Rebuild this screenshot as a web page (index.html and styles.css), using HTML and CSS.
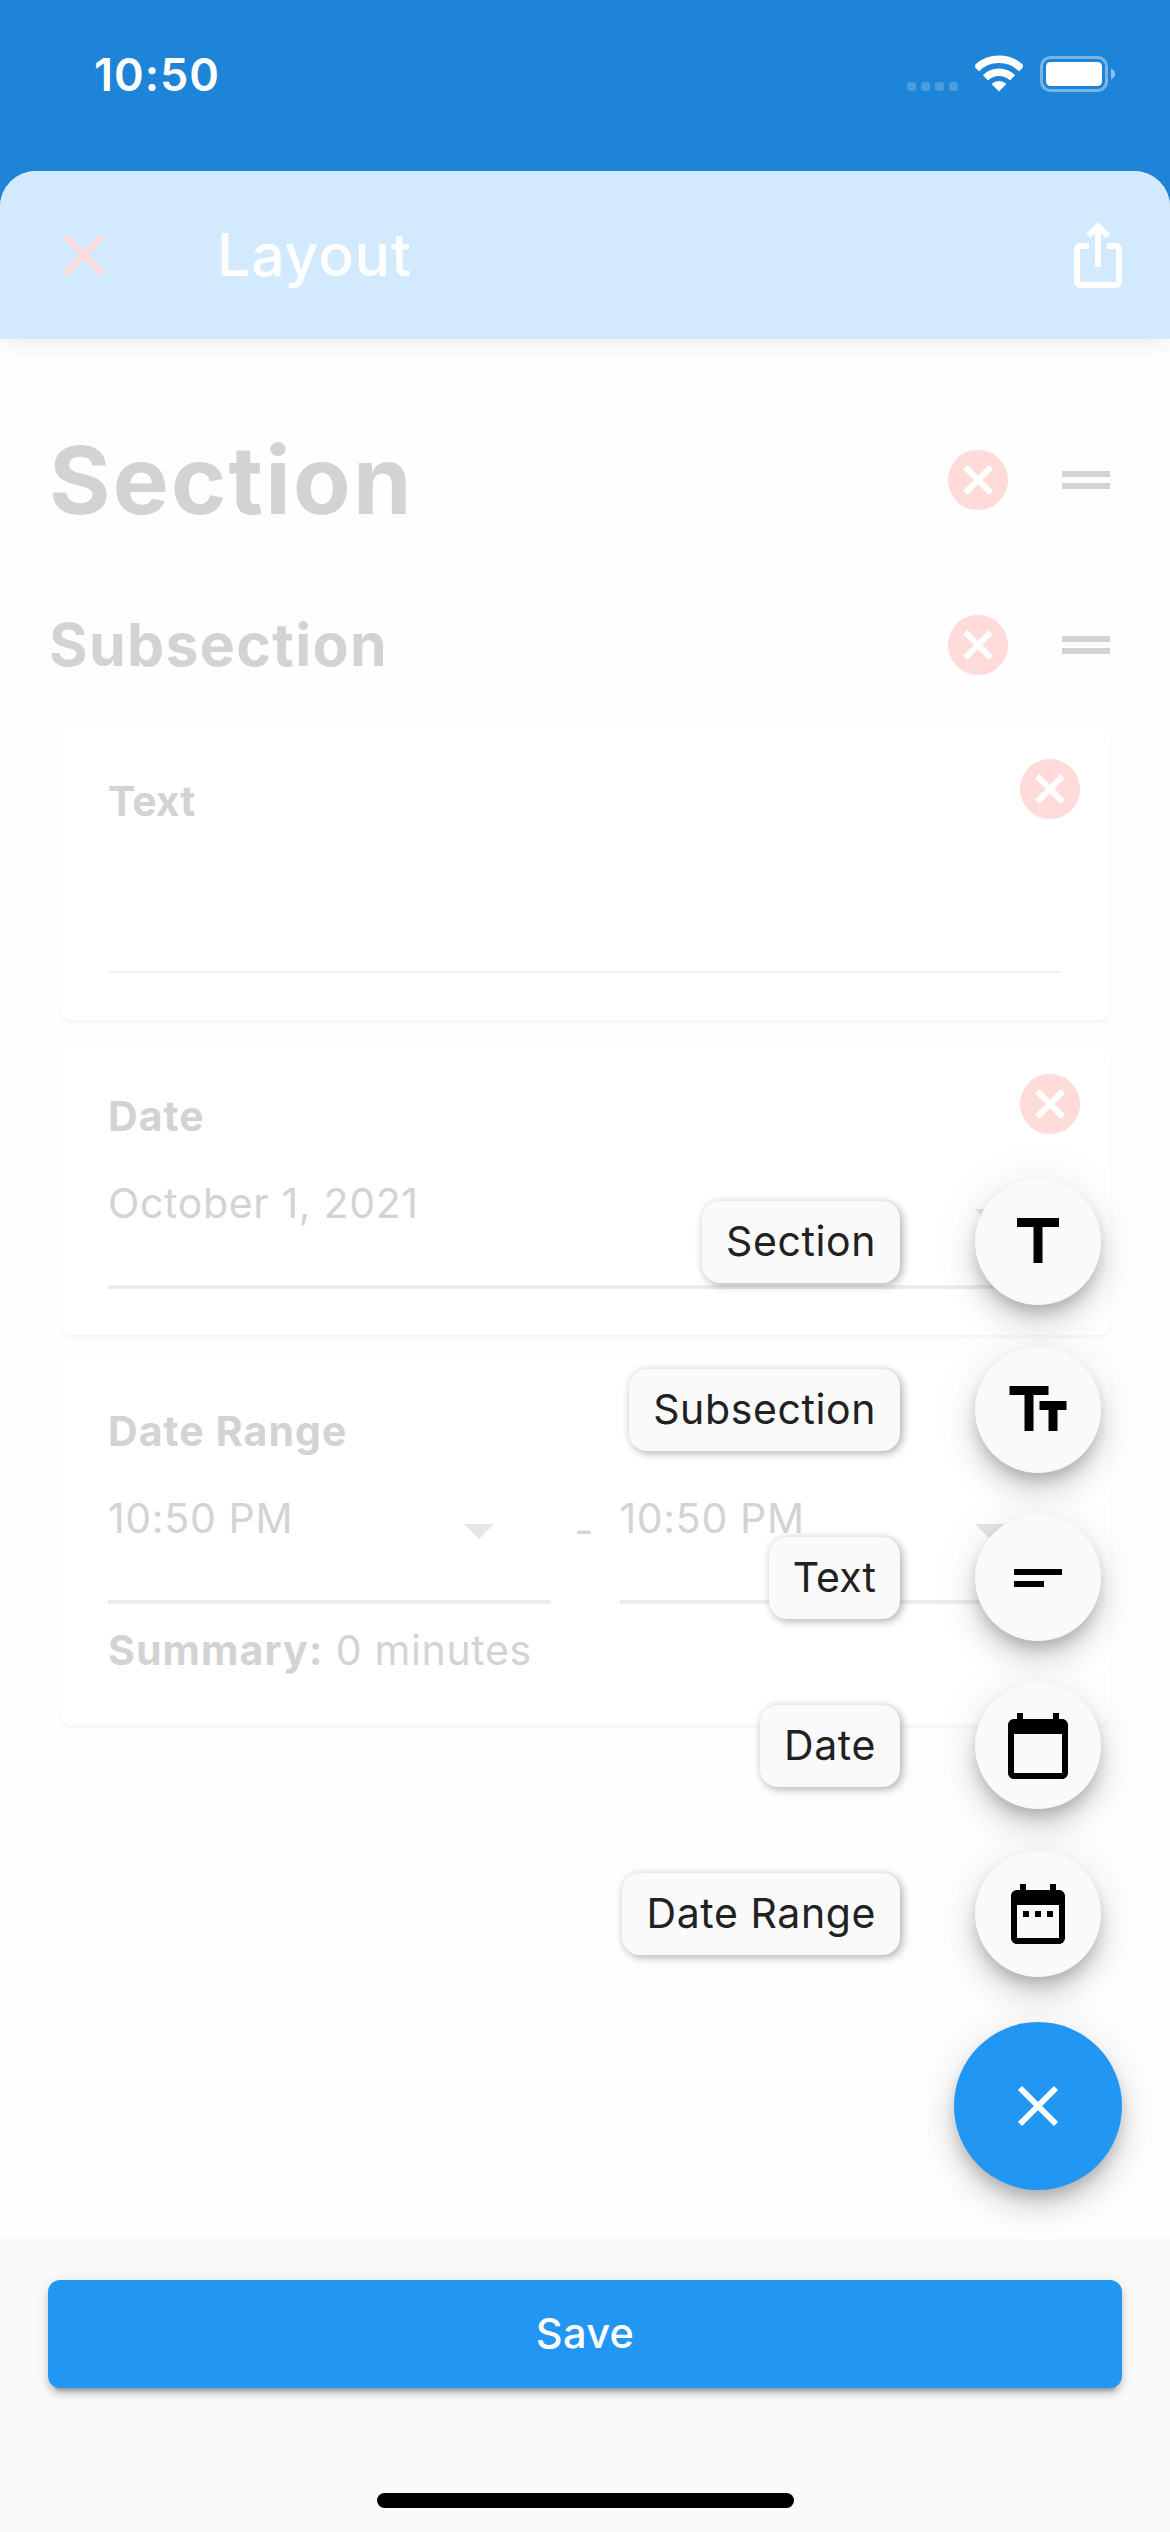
FILE: index.html
```html
<!DOCTYPE html>
<html lang="en">
<head>
<meta charset="utf-8">
<title>Layout</title>
<link rel="stylesheet" href="styles.css">
</head>
<body>
<svg class="defs" aria-hidden="true">
  <symbol id="cancel" viewBox="0 0 24 24"><path d="M12 2C6.470 2 2 6.470 2 12s4.470 10 10 10 10-4.470 10-10S17.530 2 12 2zm5 13.590L15.590 17 12 13.410 8.410 17 7 15.590 10.590 12 7 8.410 8.410 7 12 10.590 15.590 7 17 8.410 13.410 12 17 15.590z"/></symbol>
  <symbol id="handle" viewBox="0 0 24 24"><path d="M20 9H4v2h16V9zM4 15h16v-2H4v2z"/></symbol>
  <symbol id="arrow" viewBox="0 0 30 15"><path d="M0 0h30L15 15z"/></symbol>
</svg>
<div class="phone">
  <header class="status">
    <span class="time">10:50</span>
    <div class="indicators">
      <div class="dots"><i></i><i></i><i></i><i></i></div>
      <svg class="wifi" width="48" height="37" viewBox="0 0 48 37">
        <defs><clipPath id="wedge"><path d="M24 36.500L.2 12.500V0h47.600v12.500z"/></clipPath></defs>
        <g clip-path="url(#wedge)">
          <circle cx="24" cy="36.5" r="32.2" fill="none" stroke="#fff" stroke-width="7.6"/>
          <circle cx="24" cy="36.5" r="19.3" fill="none" stroke="#fff" stroke-width="7.4"/>
          <circle cx="24" cy="36.5" r="10.5" fill="#fff"/>
        </g>
      </svg>
      <svg class="battery" width="76" height="36" viewBox="0 0 76 36">
        <rect x="1.5" y="1.5" width="65" height="33" rx="9" fill="none" stroke="#fff" stroke-opacity=".4" stroke-width="3"/>
        <rect x="6" y="6" width="56" height="24" rx="4.5" fill="#fff"/>
        <path d="M71 12.500c2.600 1 4 3 4 5.500s-1.400 4.500-4 5.500z" fill="#fff" fill-opacity=".5"/>
      </svg>
    </div>
  </header>

  <main class="sheet">
    <div class="appbar">
      <svg class="close" width="42" height="42" viewBox="0 0 42 42"><path d="M4 4l34 34M38 4L4 38" stroke="#ffdbda" stroke-width="6" stroke-linecap="round"/></svg>
      <h1>Layout</h1>
      <svg class="share" width="72" height="72" viewBox="0 0 24 24"><path fill="#fff" d="M16 5l-1.420 1.420-1.590-1.590V16h-1.980V4.830L9.420 6.420 8 5l4-4 4 4zm4 5v11c0 1.100-.9 2-2 2H6c-1.110 0-2-.9-2-2V10c0-1.110.89-2 2-2h3v2H6v11h12V10h-3V8h3c1.100 0 2 .89 2 2z"/></svg>
    </div>

    <div class="content">
      <div class="heading section">
        <h2>Section</h2>
        <svg class="cancel"><use href="#cancel"/></svg>
        <svg class="handle"><use href="#handle"/></svg>
      </div>
      <div class="heading subsection">
        <h3>Subsection</h3>
        <svg class="cancel"><use href="#cancel"/></svg>
        <svg class="handle"><use href="#handle"/></svg>
      </div>

      <div class="cards">
        <section class="card">
          <div class="title snug">Text</div>
          <div class="field thin"></div>
          <svg class="cancel corner"><use href="#cancel"/></svg>
        </section>
        <section class="card">
          <div class="title">Date</div>
          <div class="field"><span>October 1, 2021</span><svg class="arrow"><use href="#arrow"/></svg></div>
          <svg class="cancel corner"><use href="#cancel"/></svg>
        </section>
        <section class="card range">
          <div class="title">Date Range</div>
          <div class="pair">
            <div class="field"><span>10:50 PM</span><svg class="arrow"><use href="#arrow"/></svg></div>
            <span class="dash">-</span>
            <div class="field"><span>10:50 PM</span><svg class="arrow"><use href="#arrow"/></svg></div>
          </div>
          <div class="summary"><b>Summary:</b> 0 minutes</div>
        </section>
      </div>
    </div>

    <footer>
      <button class="save">Save</button>
      <div class="home"></div>
    </footer>
  </main>

  <nav class="dial">
    <div class="action"><span class="label">Section</span><span class="mini"><svg viewBox="0 0 24 24"><path d="M5 4v3h5.500v12h3V7H19V4z"/></svg></span></div>
    <div class="action"><span class="label">Subsection</span><span class="mini"><svg viewBox="0 0 24 24"><path d="M2.500 4v3h5v12h3V7h5V4h-13zm19 5h-9v3h3v7h3v-7h3V9z"/></svg></span></div>
    <div class="action"><span class="label tight">Text</span><span class="mini"><svg viewBox="0 0 24 24"><path d="M4 9h16v2H4V9zm0 4h10v2H4v-2z"/></svg></span></div>
    <div class="action"><span class="label">Date</span><span class="mini"><svg viewBox="0 0 24 24"><path d="M20 3h-1V1h-2v2H7V1H5v2H4c-1.100 0-2 .9-2 2v16c0 1.100.9 2 2 2h16c1.100 0 2-.9 2-2V5c0-1.100-.9-2-2-2zm0 18H4V8h16v13z"/></svg></span></div>
    <div class="action"><span class="label">Date Range</span><span class="mini"><svg viewBox="0 0 24 24"><path d="M9 11H7v2h2v-2zm4 0h-2v2h2v-2zm4 0h-2v2h2v-2zm2-7h-1V2h-2v2H8V2H6v2H5c-1.110 0-2 .9-2 2v14c0 1.100.89 2 2 2h14c1.100 0 2-.9 2-2V6c0-1.100-.9-2-2-2zm0 16H5V9h14v11z"/></svg></span></div>
    <div class="fab"><svg width="42" height="42" viewBox="0 0 42 42"><path d="M3 3l36 36M39 3L3 39" stroke="#fff" stroke-width="6"/></svg></div>
  </nav>
</div>
</body>
</html>
```

FILE: styles.css
```css
* { box-sizing: border-box; }
body { margin: 0; font-family: Inter, "Liberation Sans", sans-serif; }
svg { display: block; flex: none; }
.defs { position: absolute; width: 0; height: 0; }
h1, h2, h3 { margin: 0; }

.phone {
  position: relative;
  display: flex;
  flex-direction: column;
  width: 1170px;
  height: 2532px;
  overflow: hidden;
  background: #1e84d8;
}

/* Status bar */
.status {
  display: flex;
  justify-content: space-between;
  height: 171px;
  padding: 0 54px 0 94px;
  color: #fff;
}
.time { margin-top: 50px; font-size: 45px; line-height: 50px; font-weight: 600; letter-spacing: 1px; }
.indicators { display: flex; align-items: flex-start; }
.dots { display: flex; gap: 5px; margin: 82px 17px 0 0; }
.dots i { width: 9px; height: 9px; border-radius: 3px; background: rgba(255,255,255,.2); }
.wifi { margin: 54.500px 17px 0 0; }
.battery { margin-top: 56px; }

/* Sheet */
.sheet {
  flex: 1;
  display: flex;
  flex-direction: column;
  overflow: hidden;
  border-radius: 36px 36px 0 0;
  background: #fefefe;
}
.appbar {
  position: relative;
  display: flex;
  align-items: center;
  flex: none;
  height: 168px;
  padding: 0 36px 0 63px;
  background: #d3e9fd;
  box-shadow: 0 12px 15px -3px rgba(0,0,0,.04), 0 3px 30px rgba(0,0,0,.024);
}
.appbar h1 { flex: 1; margin-left: 112px; font-size: 59px; font-weight: 500; line-height: 72px; letter-spacing: .8px; color: #fff; }

.content { flex: 1; padding: 59px 48px 0; color: #d3d3d3; }
.heading { display: flex; align-items: center; }
.heading h2, .heading h3 { flex: 1; font-weight: 700; }
.section { height: 164px; }
.section h2 { margin-left: 1px; font-size: 94px; line-height: 108px; letter-spacing: 2.250px; }
.subsection { height: 166px; }
.subsection h3 { margin-left: 1px; font-size: 59px; line-height: 70px; letter-spacing: 1.300px; }
.cancel { width: 72px; height: 72px; fill: #ffdbda; }
.handle { width: 72px; height: 72px; margin-left: 36px; fill: #d3d3d3; }

.cards { display: flex; flex-direction: column; gap: 24px; padding: 1px 12px 0; }
.card {
  position: relative;
  height: 291px;
  padding: 47px 48px 0;
  border-radius: 12px;
  background: #fff;
  font-size: 41px;
  line-height: 50px;
  letter-spacing: .65px;
  box-shadow: 0 3px 3px rgba(0,0,0,.028), 0 2px 8px rgba(0,0,0,.016);
}
.card.range { height: 366px; }
.title, .summary b { font-size: 41px; font-weight: 700; letter-spacing: 1.100px; }
.title.snug { letter-spacing: 0; }
.field {
  display: flex;
  justify-content: space-between;
  flex: 1;
  height: 111px;
  margin-top: 37px;
  padding-right: 57px;
  border-bottom: 4px solid #ececec;
}
.field.thin { height: 110px; border-bottom: 2px solid #f2f2f2; }
.arrow { width: 30px; height: 15px; margin-top: 31px; fill: #e6e6e6; }
.corner { position: absolute; top: 24px; right: 24px; }
.pair { display: flex; }
.dash { width: 69px; margin-top: 49px; padding-left: 24px; }
.summary { margin-top: 21px; }

footer { display: flex; flex-direction: column; flex: none; height: 294px; padding: 42px 48px 0; background: #fafafa; }
.save {
  height: 108px;
  border: 0;
  padding: 0 0 2px;
  border-radius: 12px;
  background: #2196f3;
  color: #fff;
  font: 500 41.500px/50px Inter, sans-serif;
  letter-spacing: .3px;
  box-shadow: 0 9px 3px -6px rgba(0,0,0,.2), 0 6px 6px rgba(0,0,0,.14), 0 3px 15px rgba(0,0,0,.12);
}
.home { align-self: center; width: 417px; height: 15px; margin-top: 105px; border-radius: 8px; background: #000; }

/* Speed dial, floating over the sheet */
.dial { position: absolute; right: 48px; top: 1179px; display: flex; flex-direction: column; align-items: flex-end; gap: 42px; }
.action { display: flex; align-items: center; gap: 75px; height: 126px; margin-right: 21px; }
.label {
  padding: 15px 24px 17px;
  border-radius: 18px;
  background: #fafafa;
  color: #212121;
  font-size: 41px;
  line-height: 50px;
  letter-spacing: .6px;
  box-shadow: 3px 3px 9px rgba(0,0,0,.24), 0 0 9px rgba(0,0,0,.1);
}
.label.tight { letter-spacing: .1px; }
.mini, .fab { display: flex; align-items: center; justify-content: center; border-radius: 50%; }
.mini {
  width: 126px;
  height: 126px;
  background: #fafafa;
  box-shadow: 0 9px 15px -3px rgba(0,0,0,.2), 0 18px 30px rgba(0,0,0,.14), 0 3px 54px rgba(0,0,0,.07);
}
.mini svg { width: 72px; height: 72px; }
.fab {
  width: 168px;
  height: 168px;
  margin-top: 3px;
  background: #2196f3;
  box-shadow: 0 9px 15px -3px rgba(0,0,0,.2), 0 18px 30px rgba(0,0,0,.14), 0 3px 54px rgba(0,0,0,.07);
}
```
